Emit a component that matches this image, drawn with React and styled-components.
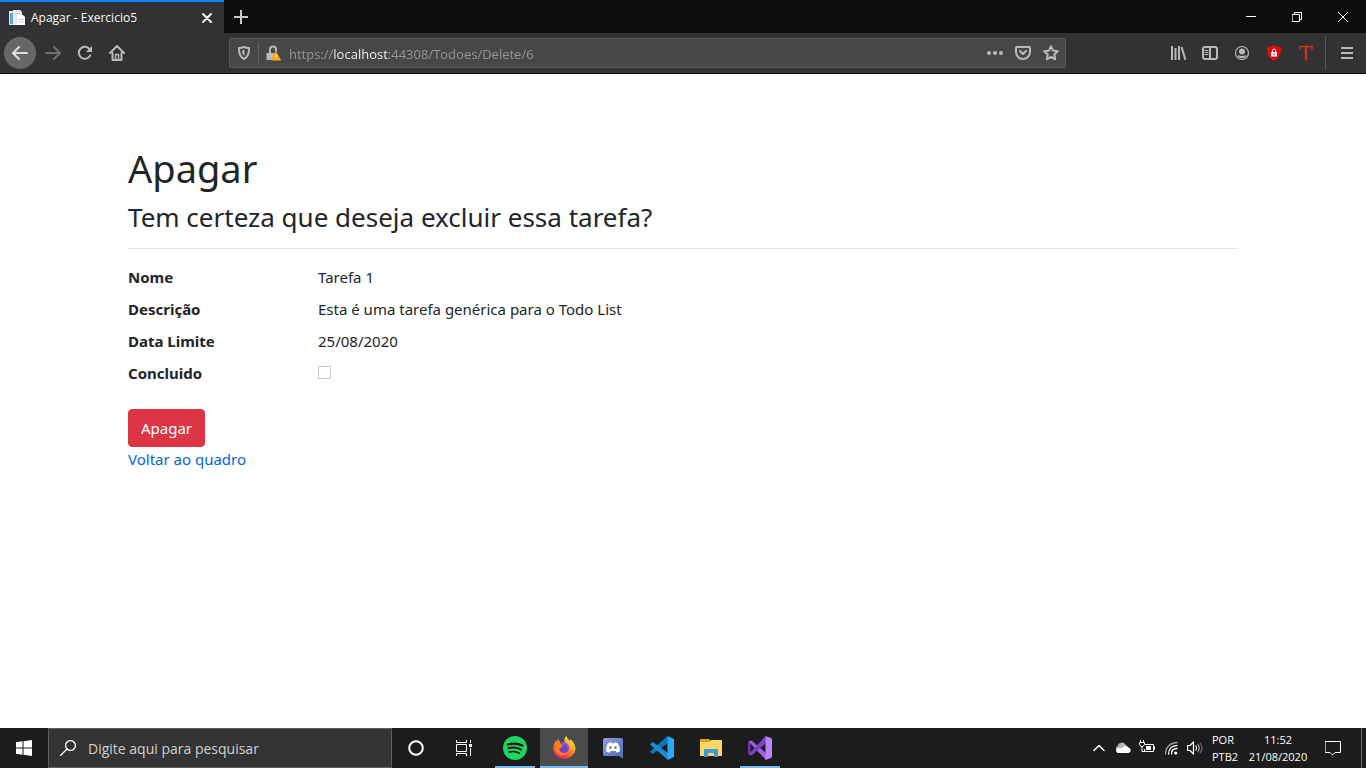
import React from "react";
import styled, { createGlobalStyle, css } from "styled-components";

const ui = `"Open Sans", "Noto Sans", sans-serif`;
const page = `"Noto Sans", "Open Sans", sans-serif`;

const Global = createGlobalStyle`
  *, *::before, *::after { box-sizing: border-box; }
  body { margin: 0; background: #fff; font-family: ${page}; }
  button, input { font: inherit; }
  svg { display: block; flex: none; }
`;

const Screen = styled.div`
  min-height: 100vh;
  display: flex;
  flex-direction: column;
`;

/* ---------- browser chrome ---------- */

const TabStrip = styled.header`
  display: flex;
  height: 33px;
  background: #0c0c0d;
  color: #f9f9fa;
  font-family: ${ui};
`;

const Tab = styled.div`
  display: flex;
  align-items: center;
  gap: 6px;
  width: 224px;
  padding: 0 8px 0 9px;
  border-top: 2px solid #0a84ff;
  background: #323234;
  font-size: 12px;
  line-height: 16px;
`;

const TabTitle = styled.span`
  flex: 1;
  white-space: nowrap;
`;

const iconButton = css`
  display: flex;
  align-items: center;
  justify-content: center;
  padding: 0;
  border: 0;
  background: none;
  color: inherit;
`;

const TabClose = styled.button`
  ${iconButton}
  width: 18px;
  height: 20px;
`;

const NewTab = styled.button`
  ${iconButton}
  width: 34px;
  color: #c8c8c9;
`;

const WindowControls = styled.div`
  display: flex;
  margin-left: auto;
`;

const WindowButton = styled.button`
  ${iconButton}
  width: 46px;
  color: #fff;
`;

const Toolbar = styled.nav`
  display: flex;
  align-items: center;
  height: 41px;
  padding: 0 3px 0 4px;
  border-bottom: 1px solid #0c0c0d;
  background: #323234;
  color: #b9b9ba;
  font-family: ${ui};
`;

const ToolButton = styled.button`
  ${iconButton}
  width: 32px;
  height: 32px;
  margin-right: ${(p) => (p.$round ? "1px" : "0")};
  border-radius: ${(p) => (p.$round ? "50%" : "2px")};
  background: ${(p) => (p.$round ? "#676768" : "none")};
  color: ${(p) => (p.$dim ? "#6f6f71" : p.$round ? "#dededf" : "inherit")};
`;

const AddressBar = styled.form`
  display: flex;
  flex: 1;
  align-items: center;
  height: 30px;
  margin: 0 96px;
  border: 1px solid #5a5a5c;
  border-radius: 2px;
  background: #474749;
`;

const AddressButton = styled.button`
  ${iconButton}
  width: 28px;
  height: 28px;
`;

const AddressRule = styled.span`
  width: 1px;
  height: 22px;
  background: #626468;
`;

const Address = styled.input`
  flex: 1;
  min-width: 0;
  padding: 2px 0 0 2px;
  border: 0;
  outline: 0;
  font-size: 13px;
  line-height: 20px;
  color: #98989a;
  background: linear-gradient(to right, #98989a 47px, #f9f9fa 47px, #f9f9fa 102px, #98989a 102px);
  background-clip: text;
  -webkit-background-clip: text;
  -webkit-text-fill-color: transparent;
`;

const ToolbarRule = styled.span`
  width: 1px;
  height: 34px;
  margin: 0 5px 0 3px;
  background: #5a5a5c;
`;

/* ---------- page ---------- */

const Main = styled.main`
  flex: 1;
  width: 100%;
  max-width: 1140px;
  margin: 0 auto;
  padding: 70px 15px 16px;
  color: #212529;
  font-size: 16px;
  line-height: 24px;
`;

const Title = styled.h1`
  margin: 0 0 8px;
  font-size: 38px;
  line-height: 48px;
  font-weight: 400;
`;

const Question = styled.h3`
  margin: 0 0 14px;
  font-size: 26px;
  line-height: 34px;
  font-weight: 400;
`;

const Divider = styled.hr`
  margin: 0 0 16px;
  border: 0;
  border-top: 1px solid #e5e5e5;
`;

const Details = styled.dl`
  display: grid;
  grid-template-columns: 1fr 5fr;
  row-gap: 8px;
  margin: 0 -15px 24px;
  font-size: 15px;
`;

const Term = styled.dt`
  padding: 0 15px;
  font-weight: 700;
`;

const Value = styled.dd`
  min-height: 24px;
  margin: 0;
  padding: 0 15px;
`;

const Check = styled.input`
  appearance: none;
  display: block;
  width: 13px;
  height: 13px;
  margin: 5px 0 0;
  border: 1px solid #c8c8c8;
  background: #fff;
`;

const DeleteButton = styled.button`
  display: block;
  height: 38px;
  padding: 0 12px;
  border: 1px solid #dc3545;
  border-radius: 4px;
  background: #dc3545;
  color: #fff;
  font-size: 15px;
`;

const BackLink = styled.a`
  color: #0366d6;
  font-size: 15px;
  text-decoration: none;
`;

/* ---------- taskbar ---------- */

const Taskbar = styled.footer`
  display: flex;
  height: 40px;
  background: #1c1c1c;
  color: #fff;
  font-family: ${ui};
`;

const TaskButton = styled.button`
  ${iconButton}
  position: relative;
  width: 48px;
  background: ${(p) => (p.$active ? "#4b4b4b" : "none")};
  &::after {
    content: "";
    display: ${(p) => (p.$running || p.$active ? "block" : "none")};
    position: absolute;
    bottom: 0;
    left: ${(p) => (p.$active ? "0" : "4px")};
    right: ${(p) => (p.$active ? "0" : "4px")};
    height: 2px;
    background: #76b9ed;
  }
`;

const Search = styled.label`
  display: flex;
  align-items: center;
  gap: 12px;
  width: 344px;
  padding: 0 11px;
  border: 1px solid #5f5f5f;
  background: #333;
`;

const SearchInput = styled.input`
  flex: 1;
  min-width: 0;
  padding: 2px 0 0;
  border: 0;
  outline: 0;
  background: none;
  color: #fff;
  font-size: 14px;
  line-height: 20px;
  &::placeholder { color: #d0d0d0; opacity: 1; }
`;

const Apps = styled.div`
  display: flex;
  gap: 1px;
  padding-left: 3px;
`;

const Tray = styled.div`
  display: flex;
  margin-left: auto;
`;

const TrayButton = styled.button`
  ${iconButton}
  width: 24px;
`;

const TrayText = styled.div`
  display: flex;
  flex-direction: column;
  justify-content: center;
  align-items: ${(p) => (p.$center ? "center" : "flex-start")};
  width: ${(p) => (p.$center ? "62px" : "40px")};
  padding-left: ${(p) => (p.$center ? "0" : "5px")};
  font-size: 11px;
  line-height: 17px;
  white-space: nowrap;
`;

const Notifications = styled.button`
  ${iconButton}
  width: 48px;
  margin-right: 4px;
`;

const ShowDesktop = styled.button`
  width: 5px;
  padding: 0;
  border: 0;
  border-left: 1px solid #696969;
  background: none;
`;

const Svg = ({ size = 16, h, children, ...rest }) => (
  <svg
    width={size}
    height={h || size}
    viewBox={`0 0 ${size} ${h || size}`}
    fill="none"
    stroke="currentColor"
    strokeWidth="2"
    strokeLinecap="round"
    strokeLinejoin="round"
    aria-hidden="true"
    {...rest}
  >
    {children}
  </svg>
);

const Solid = (props) => <Svg stroke="none" {...props} />;

const PageIcon = () => (
  <Solid>
    <path d="M0 1h5v14H0z" fill="#cfe6f3" />
    <path d="M1 3h3v11H1z" fill="#5fa8cf" />
    <path d="M4 0h7l2 2v13H4z" fill="#e9eef2" />
    <path d="M8 5h6l2 2v8H8z" fill="#fff" />
    <path d="M6 3.500h4M6 6h1M10 9.500h4M10 12h4" stroke="#c3cdd4" strokeWidth="1" />
  </Solid>
);

const DiscordIcon = () => (
  <Solid size={20} h={21}>
    <defs>
      <linearGradient id="discord" x1="0" y1="0" x2="1" y2="1">
        <stop offset="0" stopColor="#8aa0e0" />
        <stop offset="1" stopColor="#5067b0" />
      </linearGradient>
    </defs>
    <path d="M2 0h16a2 2 0 0 1 2 2v19l-4-3H2a2 2 0 0 1-2-2V2a2 2 0 0 1 2-2z" fill="url(#discord)" />
    <path d="M5 5.500c1.200-.9 2.300-1.200 3.200-1.200l.5.900h2.600l.5-.9c.9 0 2 .3 3.200 1.200 1.400 2.300 2 4.800 1.800 7.700-1.300 1-2.400 1.300-3.400 1.400l-.9-1.500H7.500l-.9 1.500c-1-.1-2.100-.4-3.400-1.400C3 10.300 3.600 7.800 5 5.500z" fill="#fff" />
    <circle cx="7.500" cy="9.700" r="1.400" fill="#6a80c8" />
    <circle cx="12.500" cy="9.700" r="1.400" fill="#6a80c8" />
  </Solid>
);

const FirefoxIcon = () => (
  <Solid size={24}>
    <defs>
      <linearGradient id="fox" x1=".85" y1=".05" x2=".2" y2=".95">
        <stop offset="0" stopColor="#fff44f" />
        <stop offset=".35" stopColor="#ffa624" />
        <stop offset=".65" stopColor="#ff5a3c" />
        <stop offset="1" stopColor="#e8187c" />
      </linearGradient>
    </defs>
    <path d="M14.500 0c.5 2.500 2 3.500 3.500 5 .2-1 .1-1.500-.1-2.200C20.500 5 23.500 8.500 23.500 13A11.300 11 0 0 1 1 13c0-3 .9-5 2-6.500V4l2 1.700L6 3l2 3c2-.2 3 0 4.500.5C12 4 12.500 1.500 14.500 0z" fill="url(#fox)" />
    <path d="M8 6.500c4-2 9 1 9 5.500a5 5 0 0 1-5 4.800c-3 0-5-2-5.200-5z" fill="#6b45d0" />
    <path d="M11 7.500c2.500-.5 4.500 1 4.500 3.500" stroke="#9059ff" strokeWidth="1.500" />
    <path d="M2.500 7.500C4.500 5.500 7 6 8.500 7.500c.8 1.200 2.200 1 3.200 1.300-.1 1.300-1.500 1.700-2.500 2-.2 1.600-1 2-2.200 2 .8 3.500 4.300 5.500 7.500 4-2.500 3.700-9 3.400-11.500-2C2.200 12.500 2 9.500 2.500 7.500z" fill="#ff7b22" />
  </Solid>
);

const details = [
  ["Nome", "Tarefa 1"],
  ["Descrição", "Esta é uma tarefa genérica para o Todo List"],
  ["Data Limite", "25/08/2020"],
];

export default function App() {
  return (
    <Screen>
      <Global />
      <TabStrip>
        <Tab>
          <PageIcon />
          <TabTitle>Apagar - Exercicio5</TabTitle>
          <TabClose aria-label="Fechar aba">
            <Svg size={10}><path d="M1 1l8 8M9 1l-8 8" /></Svg>
          </TabClose>
        </Tab>
        <NewTab aria-label="Nova aba">
          <Svg size={14} strokeLinecap="butt"><path d="M7 0v14M0 7h14" /></Svg>
        </NewTab>
        <WindowControls>
          <WindowButton aria-label="Minimizar">
            <Svg size={10} strokeWidth="1" strokeLinecap="butt"><path d="M0 4.500h10" /></Svg>
          </WindowButton>
          <WindowButton aria-label="Restaurar">
            <Svg size={10} strokeWidth="1" strokeLinejoin="miter"><path d="M.5 2.500h7v7h-7zM2.500 2.500v-2h7v7h-2" /></Svg>
          </WindowButton>
          <WindowButton aria-label="Fechar">
            <Svg size={10} strokeWidth="1"><path d="M0 0l10 10M10 0L0 10" /></Svg>
          </WindowButton>
        </WindowControls>
      </TabStrip>

      <Toolbar>
        <ToolButton $round aria-label="Voltar">
          <Svg><path d="M15 8H1.500M7 2L1 8l6 6" /></Svg>
        </ToolButton>
        <ToolButton $dim aria-label="Avançar">
          <Svg><path d="M1 8h13.500M9 2l6 6-6 6" /></Svg>
        </ToolButton>
        <ToolButton aria-label="Recarregar">
          <Svg>
            <path d="M13.200 10.500A6 6 0 1 1 12.500 4" />
            <path d="M15 1v6H9z" fill="currentColor" stroke="none" />
          </Svg>
        </ToolButton>
        <ToolButton aria-label="Início">
          <Svg>
            <path d="M1 8l7-7 7 7M3.500 8v7h9V8" />
            <path d="M6.500 15V9.500h3V15" strokeWidth="1.500" />
          </Svg>
        </ToolButton>

        <AddressBar onSubmit={(e) => e.preventDefault()}>
          <AddressButton type="button" aria-label="Proteção">
            <Svg size={14}>
              <path d="M7 1c2 .8 3.500 1 5 1 .2 5-1 9-5 11C3 11 1.800 7 2 2c1.500 0 3-.2 5-1z" />
              <path d="M7.500 4v6C5.500 8.500 5 7 5 4.500z" fill="currentColor" stroke="none" />
            </Svg>
          </AddressButton>
          <AddressRule />
          <AddressButton type="button" aria-label="Conexão">
            <Svg size={16}>
              <path d="M5 8V4.500a3 3 0 0 1 6 0V6" />
              <path d="M1.500 8H10v7H1.500z" fill="currentColor" stroke="none" />
              <path d="M11 7l4.500 8h-9z" fill="#ffa60a" stroke="#ffa60a" strokeWidth="1" />
              <path d="M11 9.500v2.500M11 13.500v1" stroke="#fff" strokeWidth="1" strokeLinecap="butt" />
            </Svg>
          </AddressButton>
          <Address
            aria-label="Endereço"
            spellCheck="false"
            defaultValue="https://localhost:44308/Todoes/Delete/6"
          />
          <AddressButton type="button" aria-label="Ações da página">
            <Solid fill="currentColor">
              <circle cx="2" cy="8" r="2" /><circle cx="8" cy="8" r="2" /><circle cx="14" cy="8" r="2" />
            </Solid>
          </AddressButton>
          <AddressButton type="button" aria-label="Salvar no Pocket">
            <Svg><path d="M2 2h12q1 0 1 1v4A7 7 0 0 1 1 7V3q0-1 1-1zM5 6l3 3 3-3" /></Svg>
          </AddressButton>
          <AddressButton type="button" aria-label="Adicionar aos favoritos">
            <Svg><path d="M8 1.200l2 4.400 4.800.6-3.500 3.300.9 4.800L8 12l-4.200 2.300.9-4.800L1.200 6.200 6 5.600z" /></Svg>
          </AddressButton>
        </AddressBar>

        <ToolButton aria-label="Biblioteca">
          <Svg strokeLinecap="butt"><path d="M2 1v14M5.500 3v12M9 1v14M11.500 2l4 13" /></Svg>
        </ToolButton>
        <ToolButton aria-label="Painel lateral">
          <Svg>
            <rect x="1" y="2" width="14" height="12" rx="2" />
            <path d="M8 2v12" />
            <path d="M3 5.500h3M3 7.500h3M3 9.500h3" strokeWidth="1" />
          </Svg>
        </ToolButton>
        <ToolButton aria-label="Conta">
          <Svg>
            <circle cx="8" cy="8" r="6.500" strokeWidth="1.200" />
            <circle cx="8" cy="6.500" r="3" fill="currentColor" stroke="none" />
            <path d="M3.500 10.500h2L8 11l2.500-.5h2C11 14 5 14 3.500 10.500z" fill="currentColor" stroke="none" />
          </Svg>
        </ToolButton>
        <ToolButton aria-label="Bloqueador">
          <Solid>
            <path d="M8 0c2.500 1.500 4.500 2 7 2 .3 6-1 11-7 14C2 13 .7 8 1 2c2.500 0 4.500-.5 7-2z" fill="#e40909" />
            <path d="M5 7h6v4.500H5z" fill="#fff" />
            <path d="M6.500 7V5.500a1.500 1.500 0 0 1 3 0V7" stroke="#fff" strokeWidth="1" fill="none" />
            <path d="M8 8.500v1.500" stroke="#e40909" strokeWidth="1" />
          </Solid>
        </ToolButton>
        <ToolButton aria-label="Extensão">
          <Svg strokeLinecap="butt" strokeLinejoin="miter">
            <path d="M2 4.500V1.500h12v3" stroke="#c8351f" strokeWidth="1.500" />
            <path d="M8 1.500v13" stroke="#c8351f" strokeWidth="2.500" />
            <path d="M5.500 15h5" stroke="#8e2a1c" strokeWidth="1" />
          </Svg>
        </ToolButton>
        <ToolbarRule />
        <ToolButton aria-label="Menu">
          <Svg size={12} strokeLinecap="butt"><path d="M0 1h12M0 6h12M0 11h12" /></Svg>
        </ToolButton>
      </Toolbar>

      <Main>
        <Title>Apagar</Title>
        <Question>Tem certeza que deseja excluir essa tarefa?</Question>
        <Divider />
        <Details>
          {details.map(([term, value]) => (
            <React.Fragment key={term}>
              <Term>{term}</Term>
              <Value>{value}</Value>
            </React.Fragment>
          ))}
          <Term><label htmlFor="concluido">Concluido</label></Term>
          <Value><Check id="concluido" type="checkbox" disabled /></Value>
        </Details>
        <DeleteButton type="submit">Apagar</DeleteButton>
        <BackLink href="#quadro">Voltar ao quadro</BackLink>
      </Main>

      <Taskbar>
        <TaskButton aria-label="Iniciar">
          <Solid fill="#fff">
            <path d="M0 2.200l6.500-.9v6.200H0zM7.500 1.200L16 0v7.500H7.500zM0 8.500h6.500v6.200L0 13.800zM7.500 8.500H16V16l-8.500-1.200z" />
          </Solid>
        </TaskButton>
        <Search>
          <Svg strokeWidth="1.300"><circle cx="10.500" cy="5.500" r="4.900" /><path d="M7 9l-6.500 6.500" /></Svg>
          <SearchInput aria-label="Pesquisar" placeholder="Digite aqui para pesquisar" />
        </Search>
        <TaskButton aria-label="Cortana">
          <Svg><circle cx="8" cy="8" r="6.800" /></Svg>
        </TaskButton>
        <TaskButton aria-label="Visão de tarefas">
          <Svg strokeWidth="1" strokeLinecap="butt" strokeLinejoin="miter">
            <path d="M.5 0v2.500h10V0M.5 4.500h10v7H.5zM.5 16v-2.500h10V16M14.500 0v3M14.500 8v8" />
            <path d="M13 4h3v3h-3z" fill="currentColor" stroke="none" />
          </Svg>
        </TaskButton>
        <Apps>
          <TaskButton $running aria-label="Spotify">
            <Svg size={24} stroke="#191414">
              <circle cx="12" cy="12" r="12" fill="#1ed760" stroke="none" />
              <path d="M5 8.500c5-1.500 10.500-1 14.500 1.200" strokeWidth="2.200" />
              <path d="M5.500 12.300c4.500-1.200 8.800-.8 12.500 1.300" />
              <path d="M6 16c4-.9 7.500-.6 10.500 1.200" strokeWidth="1.600" />
            </Svg>
          </TaskButton>
          <TaskButton $active aria-label="Firefox"><FirefoxIcon /></TaskButton>
          <TaskButton aria-label="Discord"><DiscordIcon /></TaskButton>
          <TaskButton aria-label="Visual Studio Code">
            <Solid size={24}>
              <path d="M0 15.500L17.500 0 18 7 2.500 18z" fill="#0b74bb" />
              <path d="M0 8.500L2.500 6 18 17v7z" fill="#178fd8" />
              <path d="M17.500 0L24 3v18l-6.500 3z" fill="#29a9f3" />
            </Solid>
          </TaskButton>
          <TaskButton aria-label="Explorador de Arquivos">
            <Solid size={22} h={18}>
              <path d="M0 0h9l1 1v3H0z" fill="#e5a00d" />
              <path d="M0 3h9l2-2h11v16H0z" fill="#ffd764" />
              <path d="M4 10h14v8h-4v-4H8v4H4z" fill="#3f9be0" />
            </Solid>
          </TaskButton>
          <TaskButton $running aria-label="Visual Studio">
            <Solid size={24}>
              <path d="M0 6l2.500-1.500V19.500L0 18z" fill="#6a35ad" />
              <path d="M.5 5.500l3-1L18 17v7z" fill="#9a62e0" />
              <path d="M.5 18.500L17.500 0 18 7 3.500 19.500z" fill="#7c43c6" />
              <path d="M17.500 0L24 2.500v19L17.500 24z" fill="#b684f5" />
            </Solid>
          </TaskButton>
        </Apps>

        <Tray>
          <TrayButton aria-label="Mostrar ícones ocultos">
            <Svg size={12} strokeWidth="1.500"><path d="M1 8.500l5-5 5 5" /></Svg>
          </TrayButton>
          <TrayButton aria-label="OneDrive">
            <Solid size={16} h={12}>
              <path d="M2 9a3 3 0 0 1 .5-5A4.500 4.500 0 0 1 10.500 2.500L13 5z" fill="#b5b5b5" />
              <path d="M2.500 11a2.700 2.700 0 0 1 .8-5c1-.3 2 0 3 .6A4.500 4.500 0 0 1 13.500 5.500a2.800 2.800 0 0 1 0 5.500z" fill="#fff" />
            </Solid>
          </TrayButton>
          <TrayButton aria-label="Bateria">
            <Svg strokeWidth="1" strokeLinecap="butt" strokeLinejoin="miter">
              <path d="M6 4.500h8.500v7h-9V9M14.500 6.500h1v3h-1M1.500 0v2.500M4.500 0v2.500M.5 2.500h5v2L4 6.500H2L.5 4.500zM3 6.500v5h2.500" />
              <path d="M7 6h5v4H7z" fill="currentColor" stroke="none" />
            </Svg>
          </TrayButton>
          <TrayButton aria-label="Rede">
            <Svg size={14} strokeWidth="1.300">
              <path d="M1.500 13C1.500 6.500 6.500 1.500 13 1.500" stroke="#a0a0a0" />
              <path d="M4.500 13c0-5 3.500-8.500 8.500-8.500M7.500 13c0-3.300 2.200-5.500 5.500-5.500" />
              <circle cx="11.700" cy="12" r="1.600" fill="currentColor" stroke="none" />
            </Svg>
          </TrayButton>
          <TrayButton aria-label="Volume">
            <Svg strokeWidth="1.200">
              <path d="M.6 5.500H3l3.500-3.500v12L3 10.500H.6z" />
              <path d="M9 6q1.200 2 0 4" />
              <path d="M11 4.500q2.500 3.500 0 7" stroke="#aaa" />
              <path d="M13 3q4 5 0 10" stroke="#707070" />
            </Svg>
          </TrayButton>
          <TrayText><span>POR</span><span>PTB2</span></TrayText>
          <TrayText $center><span>11:52</span><span>21/08/2020</span></TrayText>
          <Notifications aria-label="Notificações">
            <Svg strokeWidth="1" strokeLinejoin="miter"><path d="M.5 1.500h15v11H10L7.500 15 5 12.500H.5z" /></Svg>
          </Notifications>
          <ShowDesktop aria-label="Mostrar área de trabalho" />
        </Tray>
      </Taskbar>
    </Screen>
  );
}
